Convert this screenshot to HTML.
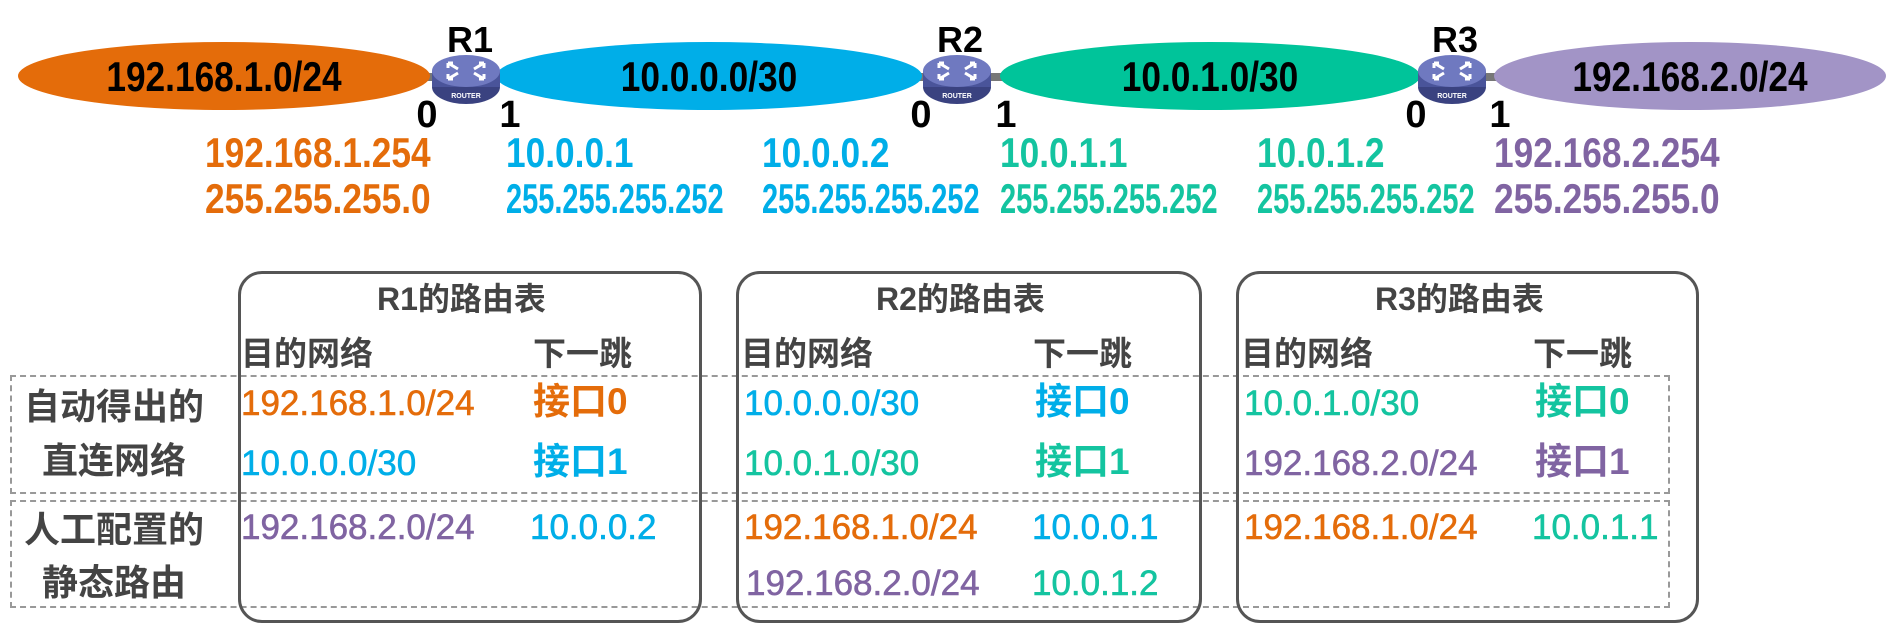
<!DOCTYPE html>
<html><head><meta charset="utf-8"><style>
body{margin:0;width:1904px;height:643px;background:#fff;overflow:hidden;position:relative;font-family:"Liberation Sans","Noto Sans CJK SC",sans-serif}
.t{position:absolute;white-space:nowrap;line-height:1}
.ip{font-size:42px;font-weight:bold;transform-origin:left center;transform:scaleX(0.84)}
.w{transform:scaleX(0.69)}
.o{color:#e46c0a}.c{color:#00aee8}.g{color:#14c4a0}.p{color:#8064a2}
.box{position:absolute;border:3px solid #555;border-radius:24px;box-sizing:border-box}
.dash{position:absolute;border:2px dashed #999;box-sizing:border-box}
.title{font-size:32px;font-weight:bold;color:#444}
.hd{font-size:33px;font-weight:bold;color:#444}
.lab{font-size:36px;font-weight:bold;color:#444}
.d{font-size:35px;-webkit-text-stroke:0.6px currentColor}
.cj{font-size:37px;font-weight:bold}
</style></head><body>
<svg width="1904" height="643" style="position:absolute;left:0;top:0">
<defs>
<g id="rt">
<ellipse cx="0" cy="8" rx="34" ry="17" fill="#3a4280"/>
<rect x="-34" y="-8" width="68" height="16" fill="#4a549a"/>
<ellipse cx="0" cy="-8" rx="34" ry="16" fill="#6f79c0"/>
<g stroke="#fff" stroke-width="3" fill="none">
<path d="M-18,-16 l10,6 M-18,-16 l0,5 M-18,-16 l5,0"/>
<path d="M18,-16 l-10,6 M18,-16 l0,5 M18,-16 l-5,0"/>
<path d="M-18,0 l10,-6 M-18,0 l0,-5 M-18,0 l5,0"/>
<path d="M18,0 l-10,-6 M18,0 l0,-5 M18,0 l-5,0"/>
</g>
<text x="0" y="19" font-size="7" fill="#fff" text-anchor="middle" font-family="Liberation Sans" font-weight="bold">ROUTER</text>
</g>
</defs>
<g stroke="#777" stroke-width="8">
<line x1="420" y1="77" x2="500" y2="77"/><line x1="915" y1="77" x2="1005" y2="77"/><line x1="1415" y1="77" x2="1500" y2="77"/>
</g>
<ellipse cx="224" cy="76" rx="206" ry="34" fill="#e46c0a"/>
<ellipse cx="709" cy="76" rx="213" ry="34" fill="#00aee8"/>
<ellipse cx="1210" cy="76" rx="210" ry="34" fill="#00c49a"/>
<ellipse cx="1690" cy="76" rx="196" ry="34" fill="#a294c6"/>
<use href="#rt" x="466" y="79"/><use href="#rt" x="957" y="79"/><use href="#rt" x="1452" y="79"/>
<g font-family="Liberation Sans" font-weight="bold" font-size="42" text-anchor="middle" fill="#000">
<text x="224" y="91" transform="translate(224,0) scale(0.84,1) translate(-224,0)">192.168.1.0/24</text>
<text x="709" y="91" transform="translate(709,0) scale(0.84,1) translate(-709,0)">10.0.0.0/30</text>
<text x="1210" y="91" transform="translate(1210,0) scale(0.84,1) translate(-1210,0)">10.0.1.0/30</text>
<text x="1690" y="91" transform="translate(1690,0) scale(0.84,1) translate(-1690,0)">192.168.2.0/24</text>
<text x="470" y="52" font-size="36">R1</text><text x="960" y="52" font-size="36">R2</text><text x="1455" y="52" font-size="36">R3</text>
<text x="427" y="127" font-size="38">0</text><text x="510" y="127" font-size="38">1</text>
<text x="921" y="127" font-size="38">0</text><text x="1006" y="127" font-size="38">1</text>
<text x="1416" y="127" font-size="38">0</text><text x="1500" y="127" font-size="38">1</text>
</g>
</svg>
<div class="t ip o" style="left:205px;top:132px">192.168.1.254</div>
<div class="t ip o" style="left:205px;top:178px">255.255.255.0</div>
<div class="t ip c" style="left:506px;top:132px">10.0.0.1</div>
<div class="t ip c w" style="left:506px;top:178px">255.255.255.252</div>
<div class="t ip c" style="left:762px;top:132px">10.0.0.2</div>
<div class="t ip c w" style="left:762px;top:178px">255.255.255.252</div>
<div class="t ip g" style="left:1000px;top:132px">10.0.1.1</div>
<div class="t ip g w" style="left:1000px;top:178px">255.255.255.252</div>
<div class="t ip g" style="left:1257px;top:132px">10.0.1.2</div>
<div class="t ip g w" style="left:1257px;top:178px">255.255.255.252</div>
<div class="t ip p" style="left:1494px;top:132px">192.168.2.254</div>
<div class="t ip p" style="left:1494px;top:178px">255.255.255.0</div>

<div class="dash" style="left:10px;top:375px;width:1660px;height:119px"></div>
<div class="dash" style="left:10px;top:500px;width:1660px;height:108px"></div>
<div class="box" style="left:238px;top:271px;width:464px;height:352px"></div>
<div class="box" style="left:736px;top:271px;width:466px;height:352px"></div>
<div class="box" style="left:1236px;top:271px;width:463px;height:352px"></div>

<div class="t lab" style="left:24px;top:389px">自动得出的</div>
<div class="t lab" style="left:42px;top:443px">直连网络</div>
<div class="t lab" style="left:24px;top:512px">人工配置的</div>
<div class="t lab" style="left:42px;top:565px">静态路由</div>

<div class="t title" style="left:377px;top:283px">R1的路由表</div>
<div class="t title" style="left:876px;top:283px">R2的路由表</div>
<div class="t title" style="left:1375px;top:283px">R3的路由表</div>

<div class="t hd" style="left:241px;top:337px">目的网络</div><div class="t hd" style="left:533px;top:337px">下一跳</div>
<div class="t hd" style="left:741px;top:337px">目的网络</div><div class="t hd" style="left:1033px;top:337px">下一跳</div>
<div class="t hd" style="left:1241px;top:337px">目的网络</div><div class="t hd" style="left:1533px;top:337px">下一跳</div>

<div class="t d o" style="left:241px;top:386px">192.168.1.0/24</div><div class="t cj o" style="left:533px;top:383px">接口0</div>
<div class="t d c" style="left:241px;top:446px">10.0.0.0/30</div><div class="t cj c" style="left:533px;top:443px">接口1</div>
<div class="t d p" style="left:241px;top:510px">192.168.2.0/24</div><div class="t d c" style="left:530px;top:510px">10.0.0.2</div>

<div class="t d c" style="left:744px;top:386px">10.0.0.0/30</div><div class="t cj c" style="left:1035px;top:383px">接口0</div>
<div class="t d g" style="left:744px;top:446px">10.0.1.0/30</div><div class="t cj g" style="left:1035px;top:443px">接口1</div>
<div class="t d o" style="left:744px;top:510px">192.168.1.0/24</div><div class="t d c" style="left:1032px;top:510px">10.0.0.1</div>
<div class="t d p" style="left:746px;top:566px">192.168.2.0/24</div><div class="t d g" style="left:1032px;top:566px">10.0.1.2</div>

<div class="t d g" style="left:1244px;top:386px">10.0.1.0/30</div><div class="t cj g" style="left:1535px;top:383px">接口0</div>
<div class="t d p" style="left:1244px;top:446px">192.168.2.0/24</div><div class="t cj p" style="left:1535px;top:443px">接口1</div>
<div class="t d o" style="left:1244px;top:510px">192.168.1.0/24</div><div class="t d g" style="left:1532px;top:510px">10.0.1.1</div>
</body></html>
